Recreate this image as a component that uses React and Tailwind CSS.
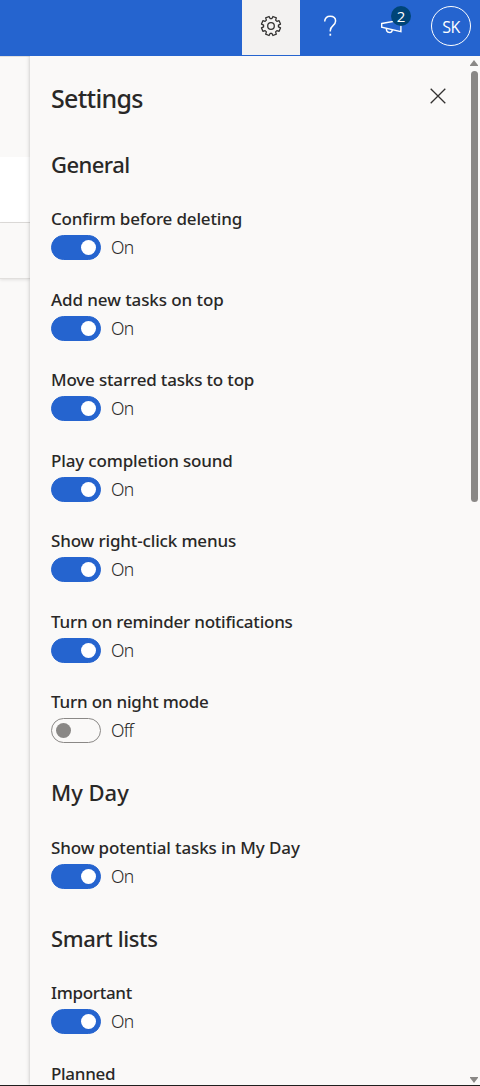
import React from "react";

const general = [
  ["Confirm before deleting", true, "tracking-[-0.17px]"],
  ["Add new tasks on top", true, "tracking-[-0.09px]"],
  ["Move starred tasks to top", true, "tracking-[-0.17px]"],
  ["Play completion sound", true, "tracking-[-0.15px]"],
  ["Show right-click menus", true, "tracking-[-0.15px]"],
  ["Turn on reminder notifications", true, "tracking-[-0.22px]"],
  ["Turn on night mode", false, "tracking-[-0.2px]"],
];

function Label({ children, tracking }) {
  return <div className={"mb-1 h-6 shrink-0 whitespace-nowrap text-[17px] font-medium leading-6 " + tracking}>{children}</div>;
}

function Setting({ label, on, tracking }) {
  return (
    <div className="h-[80.5px] shrink-0">
      <Label tracking={tracking}>{label}</Label>
      <div className="flex h-[25px] items-center gap-[10px]">
        <button
          className={
            "flex h-[25px] w-[50px] items-center rounded-full border px-1 " +
            (on ? "justify-end border-[#2564cf] bg-[#2564cf]" : "justify-start border-[#8a8886] bg-[#faf9f8]")
          }
        >
          <span className={"size-[15px] rounded-full " + (on ? "bg-white" : "bg-[#8a8886]")} />
        </button>
        <span className="text-[17.5px] font-[350] leading-[25px] tracking-[-0.7px]">{on ? "On" : "Off"}</span>
      </div>
    </div>
  );
}

function Heading({ children, className }) {
  return <h2 className={"h-[30px] shrink-0 whitespace-nowrap text-[22px] font-medium " + className}>{children}</h2>;
}

function Gear() {
  const points = [];
  for (let i = 0; i < 8; i++) {
    const c = ((i + 0.5) * Math.PI) / 4;
    for (const [r, a] of [[7.5, -0.27], [9.7, -0.19], [9.7, 0.19], [7.5, 0.27]]) {
      points.push((11 + r * Math.sin(c + a)).toFixed(2) + "," + (11 - r * Math.cos(c + a)).toFixed(2));
    }
  }
  return (
    <svg width="22" height="22" viewBox="0 0 22 22" fill="none" stroke="#323130" strokeWidth="1.3" strokeLinejoin="round">
      <polygon points={points.join(" ")} />
      <circle cx="11" cy="11" r="3.3" />
    </svg>
  );
}

export default function App() {
  return (
    <div className="flex h-[1086px] w-[480px] flex-col overflow-hidden border-b border-[#201f1e] bg-[#faf9f8] font-['Noto_Sans','Open_Sans',sans-serif] text-[#292827]">
      <header className="flex h-14 shrink-0 justify-end bg-[#2564cf] text-white">
        <button className="flex h-[55px] w-[58px] items-center justify-center bg-[#f3f2f1] pb-[3px]">
          <Gear />
        </button>
        <button className="flex w-[60px] items-center justify-center pb-1">
          <svg width="14" height="22" viewBox="0 0 14 22" fill="none" stroke="white" strokeWidth="1.5">
            <path d="M1.7 6.4C1.7 3 4 1.3 7.1 1.3s5.5 1.8 5.5 4.8c0 4.4-5.3 4.7-5.3 9.3v1" />
            <path d="M7.3 18.7v2" strokeWidth="1.7" />
          </svg>
        </button>
        <button className="relative h-14 w-[62px]">
          <svg className="absolute left-5 top-[17px]" width="24" height="18" viewBox="0 0 24 18" fill="none" stroke="white" strokeWidth="1.4">
            <path d="M1.7 6.5 20.9 3v11.6L1.7 10.2z" />
            <path d="M6.3 11.5c0 4.8 5.4 5.2 6 1.4" />
          </svg>
          <span className="absolute left-[31px] top-[6px] flex size-5 items-center justify-center rounded-full bg-[#004578] font-['Open_Sans'] text-[15px] leading-none">2</span>
        </button>
        <div className="flex w-[58px] justify-center pt-[6px]">
          <div className="flex size-10 items-center justify-center rounded-full border border-white pt-[2px] font-['Open_Sans'] text-[16px] leading-none tracking-[-0.5px]">SK</div>
        </div>
      </header>
      <main className="flex min-h-0 flex-1">
        <aside className="flex w-[30px] shrink-0 flex-col border-t border-[#e1dfdd]">
          <div className="h-[100px] shrink-0" />
          <div className="h-[66px] shrink-0 border-b border-[#dedcda] bg-white" />
          <div className="h-14 shrink-0 border-b border-[#e1dfdd] shadow-[0_1px_3px_rgba(0,0,0,0.1)]" />
        </aside>
        <section className="relative flex min-w-0 flex-1 flex-col bg-[#faf9f8] pl-[21px] shadow-[0_0_4px_rgba(0,0,0,0.25)] [clip-path:inset(0_0_0_-5px)]">
          <div className="flex h-[94px] shrink-0 items-start justify-between pr-[34px] pt-[25px]">
            <h1 className="text-[25px] font-medium leading-[34px] tracking-[-0.7px]">Settings</h1>
            <svg className="mt-[7px]" width="16" height="16" viewBox="0 0 16 16" fill="none" stroke="#323130" strokeWidth="1.3">
              <path d="m.7.7 14.6 14.6M15.3.7.7 15.3" />
            </svg>
          </div>
          <Heading className="mb-[27px] leading-[28px] tracking-[-0.55px]">General</Heading>
          {general.map(([label, on, tracking]) => (
            <Setting key={label} label={label} on={on} tracking={tracking} />
          ))}
          <Heading className="mb-[27px] mt-2 leading-[26px] tracking-[0px]">My Day</Heading>
          <Setting label="Show potential tasks in My Day" on tracking="tracking-[-0.12px]" />
          <Heading className="mb-[27px] mt-2 leading-[28px] tracking-[-0.38px]">Smart lists</Heading>
          <Setting label="Important" on tracking="tracking-[-0.3px]" />
          <Label tracking="tracking-[-0.3px]">Planned</Label>
          <div className="absolute bottom-0 right-[2px] top-[4px] flex w-[8px] flex-col items-center">
            <svg className="shrink-0" width="8" height="6" viewBox="0 0 8 6" fill="#8a8886"><path d="M4 0 8 5.2V6H0v-.8z" /></svg>
            <div className="mt-[5px] h-[431px] w-[7px] shrink-0 rounded-full bg-[#8a8886]" />
            <svg className="mb-[2px] mt-auto shrink-0" width="8" height="6" viewBox="0 0 8 6" fill="#8a8886"><path d="M0 0h8v.8L4 6 0 .8z" /></svg>
          </div>
        </section>
      </main>
    </div>
  );
}
